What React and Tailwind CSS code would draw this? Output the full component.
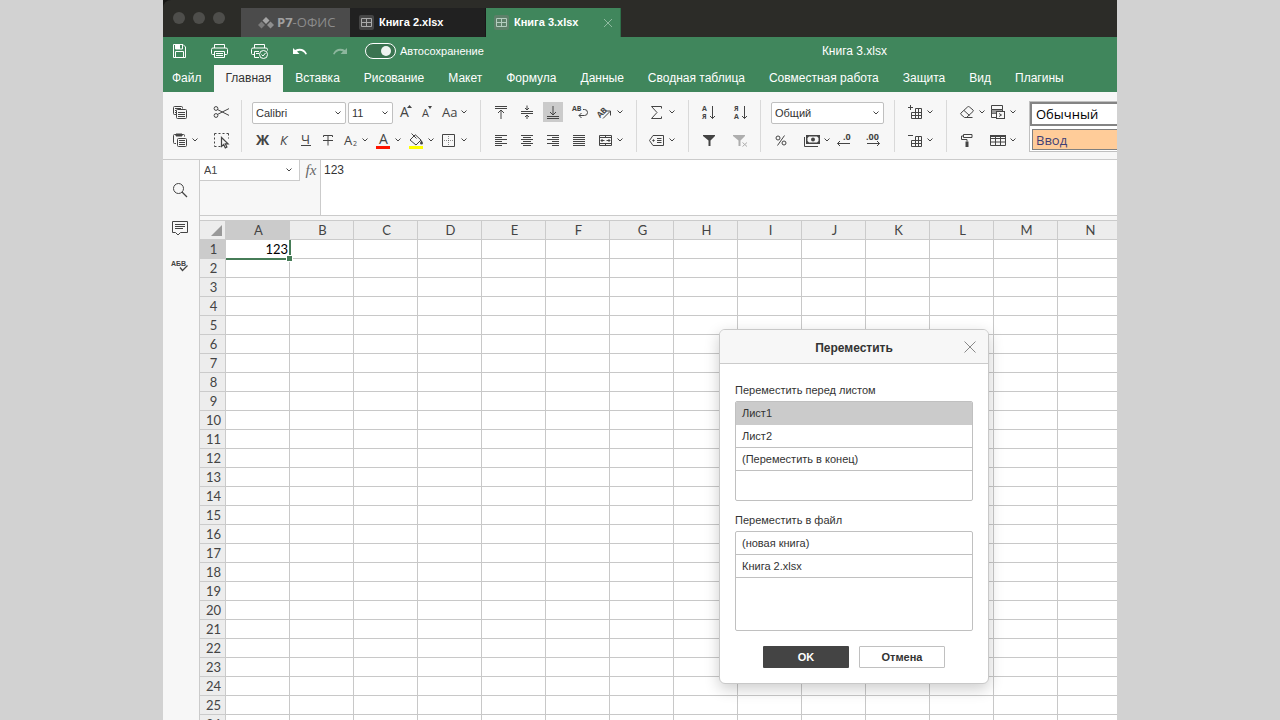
import React, { useState } from 'react';
import { clsx } from 'clsx';

const COLUMNS = ['A', 'B', 'C', 'D', 'E', 'F', 'G', 'H', 'I', 'J', 'K', 'L', 'M', 'N'];
const ROWS = Array.from({ length: 26 }, (_, i) => i + 1);

const MENU = [
  'Файл', 'Главная', 'Вставка', 'Рисование', 'Макет', 'Формула', 'Данные',
  'Сводная таблица', 'Совместная работа', 'Защита', 'Вид', 'Плагины',
];

const SHEETS = ['Лист1', 'Лист2', '(Переместить в конец)'];
const BOOKS = ['(новая книга)', 'Книга 2.xlsx'];

function Svg({ children, className }) {
  return (
    <svg viewBox="0 0 20 20" fill="none" stroke="currentColor" className={clsx('w-5 h-5 shrink-0', className)} aria-hidden="true">
      {children}
    </svg>
  );
}

function Chevron({ className }) {
  return (
    <svg viewBox="0 0 8 6" fill="none" stroke="currentColor" className={clsx('w-2 h-1.5 shrink-0', className)} aria-hidden="true">
      <path d="M1.5 1.5L4 4l2.5-2.5" />
    </svg>
  );
}

const ICONS = {
  copy: (
    <>
      <path d="M6 12.5H4.5a1 1 0 0 1-1-1v-6a1 1 0 0 1 1-1h7a1 1 0 0 1 1 1v1M5 6.5h6M5 8.5h1M5 10.5h1" />
      <rect x="6.5" y="7.5" width="10" height="9" rx="1" />
      <path d="M8 10.5h7M8 12.5h7M8 14.5h7" />
    </>
  ),
  paste: (
    <>
      <path d="M6 13.5H4.5a1 1 0 0 1-1-1v-7a1 1 0 0 1 1-1h9a1 1 0 0 1 1 1v1" />
      <path d="M6 4h6v2H6z" fill="currentColor" />
      <rect x="7.5" y="8.5" width="9" height="8" rx="1" />
      <path d="M9 10.5h6M9 12.5h6M9 14.5h6" />
    </>
  ),
  cut: (
    <>
      <circle cx="5" cy="6.5" r="1.9" />
      <circle cx="5" cy="13.5" r="1.9" />
      <path d="M6.6 7.6L18 13.4M6.6 12.4L18 6.6" />
    </>
  ),
  selectAll: (
    <>
      <path d="M3.5 3.5h14M3.5 3.5v13M3.5 16.5h7M17.5 3.5v5" strokeDasharray="2 2" />
      <path d="M10.5 7.5v9l2.200-2 1.600 3.400 1.600-.8-1.600-3.200h2.800z" fill="#f7f7f7" strokeWidth="1.200" />
    </>
  ),
  alignTop: <path d="M4 4.5h12M4 6.5h12M10 17V8M7 11l3-3 3 3" />,
  alignMiddle: <path d="M4 9.5h12M4 11.5h12M10 3.5V8M10 17v-4M8 6l2 2 2-2M8 15l2-2 2 2" />,
  alignBottom: <path d="M4 16.5h12M4 14.5h12M10 4v9M7 10l3 3 3-3" />,
  left: <path d="M4 5.5h12M4 7.5h7M4 9.5h12M4 11.5h7M4 13.5h12M4 15.5h7" />,
  center: <path d="M4 5.5h12M6 7.5h8M4 9.5h12M6 11.5h8M4 13.5h12M6 15.5h8" />,
  right: <path d="M4 5.5h12M9 7.5h7M4 9.5h12M9 11.5h7M4 13.5h12M9 15.5h7" />,
  justify: <path d="M4 5.5h12M4 7.5h12M4 9.5h12M4 11.5h12M4 13.5h12M4 15.5h12" />,
  wrap: (
    <>
      <text x="3" y="9" fontSize="7" fontWeight="bold" fill="currentColor" stroke="none">AB</text>
      <path d="M14 7.5h1.5a2.500 2.500 0 0 1 0 6H10M12.500 11L10 13.500l2.500 2.500" />
    </>
  ),
  orient: (
    <>
      <text x="1" y="13" fontSize="8" fontWeight="bold" fill="currentColor" stroke="none" transform="rotate(-45 7 10)">AB</text>
      <path d="M8 16.5l7-7M11 9h4.500v4.500" />
    </>
  ),
  merge: (
    <>
      <path d="M4.5 5.5h12v10h-12zM10.500 5.500v2M10.500 13.500v2M4.500 7.500h12M4.500 13.500h12" />
      <path d="M6 10.500h3.500M15 10.500h-3.500M7.500 9L6 10.500 7.500 12M13.500 9l1.500 1.500-1.500 1.500" />
    </>
  ),
  sum: <path d="M14.500 6.500v-2h-10l5.500 6-5.500 6h10v-2" />,
  tag: (
    <>
      <path d="M6 5.500h10.500v10H6L2.500 10.500z" />
      <circle cx="6.500" cy="10.500" r=".7" fill="currentColor" />
      <path d="M10 8.500h4.500M10 10.500h4.500M10 12.500h4.500" />
    </>
  ),
  sortAsc: (
    <>
      <text x="3" y="9" fontSize="7" fontWeight="bold" fill="currentColor" stroke="none">А</text>
      <text x="3" y="17" fontSize="7" fontWeight="bold" fill="currentColor" stroke="none">Я</text>
      <path d="M13.500 4v12.500M11 14l2.500 2.500L16 14" />
    </>
  ),
  sortDesc: (
    <>
      <text x="3" y="9" fontSize="7" fontWeight="bold" fill="currentColor" stroke="none">Я</text>
      <text x="3" y="17" fontSize="7" fontWeight="bold" fill="currentColor" stroke="none">А</text>
      <path d="M13.500 4v12.500M11 14l2.500 2.500L16 14" />
    </>
  ),
  filter: <path d="M4 5h12v1l-4.500 4.500V16h-2v-5.500L4 6z" fill="currentColor" stroke="none" />,
  clearFilter: (
    <>
      <path d="M2 5h12v1L9.500 10.500V16h-2v-5.500L2 6z" fill="currentColor" stroke="none" />
      <path d="M11.500 12.500l4.500 4M16 12.500l-4.500 4" />
    </>
  ),
  percent: (
    <>
      <circle cx="7" cy="8" r="2" />
      <circle cx="13" cy="13" r="2" />
      <path d="M13.500 5.500l-7 10" />
    </>
  ),
  money: (
    <>
      <path d="M2.500 7v9.500H16" />
      <path d="M4 5h14v9H4z" fill="currentColor" stroke="none" />
      <path d="M7 6.500h8l1.500 1.500v3L15 12.500H7L5.500 11V8z" fill="#f7f7f7" stroke="none" />
      <circle cx="11" cy="9.500" r="2" fill="currentColor" stroke="none" />
    </>
  ),
  decLess: (
    <>
      <text x="9" y="10" fontSize="9" fontWeight="bold" fill="currentColor" stroke="none">.0</text>
      <path d="M3.500 13.500H16M6 11l-2.500 2.500L6 16" />
    </>
  ),
  decMore: (
    <>
      <text x="3" y="10" fontSize="9" fontWeight="bold" fill="currentColor" stroke="none">.00</text>
      <path d="M4 13.500h12.500M14 11l2.500 2.500L14 16" />
    </>
  ),
  insertCells: <path d="M3 5.500h5M5.500 3v5M10.500 6.500h6v10h-10v-6M10.500 6.500v10M13.500 6.500v10M6.500 10.500h10M6.500 13.500h10" />,
  deleteCells: <path d="M3 5.500h5M10.500 6.500h6v10h-10v-6M10.500 6.500v10M13.500 6.500v10M6.500 10.500h10M6.500 13.500h10" />,
  eraser: <path d="M7.500 15.500l-3.500-3a1 1 0 0 1 0-1.500l6.500-6a1.500 1.500 0 0 1 2 0L16 8a1 1 0 0 1 0 1.500l-6.500 6zM7 8.500l5.500 5M9 15.500h6.500" />,
  roller: (
    <>
      <path d="M6.500 4.500h8.500v3H6.500zM6.500 6h-2v3.500h5.500v2" />
      <path d="M8.500 11.500h3V17h-3z" fill="currentColor" stroke="none" />
    </>
  ),
  condition: (
    <>
      <path d="M3.500 3.500h11v4h-11zM3.500 7.500v8H8M14.500 7.500v2M3.500 11.500H8" />
      <path d="M4 8h10v2H8.500v1.500H4z" fill="#999" stroke="none" />
      <rect x="8.500" y="9.500" width="8" height="7" />
      <path d="M11 11.500l2.500 1.500-2.500 1.500" />
    </>
  ),
  table: (
    <>
      <path d="M2.500 5.500h15v10h-15zM2.500 8.500h15M2.500 12h15M7.500 6v9.500M12.500 6v9.500" />
      <path d="M2 5h16v2H2z" fill="currentColor" stroke="none" />
    </>
  ),
  bigger: (
    <>
      <text x="5" y="15" fontSize="14" fill="currentColor" stroke="none">A</text>
      <path d="M12 6h5l-2.500-3z" fill="currentColor" stroke="none" />
    </>
  ),
  smaller: (
    <>
      <text x="5" y="15" fontSize="11" fill="currentColor" stroke="none">A</text>
      <path d="M11 4h4l-2 3z" fill="currentColor" stroke="none" />
    </>
  ),
  letterCase: <text x="3" y="15" fontSize="13" fill="currentColor" stroke="none">Aa</text>,
  bold: <text x="4" y="15" fontSize="14" fontWeight="bold" fill="currentColor" stroke="none">Ж</text>,
  italic: <text x="6" y="15" fontSize="13" fontStyle="italic" fill="currentColor" stroke="none">К</text>,
  underline: (
    <>
      <text x="5" y="14" fontSize="13" fill="currentColor" stroke="none">Ч</text>
      <path d="M5 15.500h10" />
    </>
  ),
  strike: (
    <>
      <path d="M5.500 7V5.500h9V7M10 5.500v10" />
      <path d="M5 10.500h10" />
    </>
  ),
  subscript: (
    <>
      <text x="4" y="15" fontSize="13" fill="currentColor" stroke="none">A</text>
      <text x="13" y="16" fontSize="7" fill="currentColor" stroke="none">2</text>
    </>
  ),
  fontColor: (
    <>
      <text x="6" y="14" fontSize="14" fill="currentColor" stroke="none">A</text>
      <path d="M3 16h14v3H3z" fill="#ff1400" stroke="none" />
    </>
  ),
  fill: (
    <>
      <path d="M9 4.500l6 5.500-5 5-6-5 5-5M5.500 3.500l5 5" />
      <path d="M15.500 10l1.500 3a1.500 1.500 0 1 1-3 0z" fill="currentColor" stroke="none" />
      <path d="M3 16h14v3H3z" fill="#ffff00" stroke="none" />
    </>
  ),
  borders: (
    <>
      <path d="M3.500 4.500h12v12h-12z" />
      <path d="M9.500 6v10M5 10.500h10" strokeDasharray="1 1" opacity=".6" />
    </>
  ),
};

function Tool({ icon, label, menu, active, disabled }) {
  return (
    <button aria-label={label} disabled={disabled}
      className={clsx("flex items-center gap-px font-['Open_Sans','Noto_Sans',sans-serif]", disabled && 'opacity-40')}>
      <Svg className={clsx(active && 'bg-[#cbcbcb]')}>{ICONS[icon]}</Svg>
      {menu && <Chevron />}
    </button>
  );
}

function Group({ children, className }) {
  return (
    <div className={clsx('flex flex-col shrink-0 gap-2 h-[52px] pt-0.5 border-r border-[#d9d9d9]', className)}>{children}</div>
  );
}

function Row({ children, className }) {
  return <div className={clsx('flex items-start shrink-0 h-5', className)}>{children}</div>;
}

function Combo({ label, value, className }) {
  return (
    <div className={clsx('relative flex', className)}>
      <select aria-label={label} defaultValue={value}
        className="appearance-none w-full h-[22px] pl-[3px] border border-[#c0c0c0] rounded-xs bg-white text-[11px] text-[#333]">
        <option>{value}</option>
      </select>
      <Chevron className="absolute right-1 top-2 pointer-events-none" />
    </div>
  );
}

function Ribbon() {
  return (
    <div className="flex shrink-0 pt-2 h-[68px] bg-[#f7f7f7] border-b border-[#cbcbcb] text-[#444] overflow-hidden">
      <Group className="pl-[7px] pr-2.5">
        <Row className="gap-[21px]">
          <Tool icon="copy" label="Копировать" />
          <Tool icon="cut" label="Вырезать" />
        </Row>
        <Row className="gap-3">
          <Tool icon="paste" label="Вставить" menu />
          <Tool icon="selectAll" label="Выделить всё" />
        </Row>
      </Group>

      <Group className="pl-2.5 pr-3">
        <Row className="gap-0.5">
          <Combo label="Шрифт" value="Calibri" className="w-[94px]" />
          <Combo label="Размер шрифта" value="11" className="w-[45px]" />
          <Tool icon="bigger" label="Увеличить размер шрифта" />
          <Tool icon="smaller" label="Уменьшить размер шрифта" />
          <Tool icon="letterCase" label="Изменить регистр" menu />
        </Row>
        <Row className="gap-1">
          <div className="flex gap-0.5 -mr-0.5">
            <Tool icon="bold" label="Полужирный" />
            <Tool icon="italic" label="Курсив" />
            <Tool icon="underline" label="Подчёркнутый" />
            <Tool icon="strike" label="Зачёркнутый" />
          </div>
          <Tool icon="subscript" label="Подстрочные знаки" menu />
          <Tool icon="fontColor" label="Цвет шрифта" menu />
          <Tool icon="fill" label="Цвет заливки" menu />
          <Tool icon="borders" label="Границы" menu />
        </Row>
      </Group>

      <Group className="pl-2.5 pr-3">
        <Row className="gap-1.5">
          <Tool icon="alignTop" label="По верхнему краю" />
          <Tool icon="alignMiddle" label="По середине" />
          <Tool icon="alignBottom" label="По нижнему краю" active />
          <Tool icon="wrap" label="Перенос текста" />
          <Tool icon="orient" label="Ориентация" menu />
        </Row>
        <Row className="gap-1.5">
          <Tool icon="left" label="По левому краю" />
          <Tool icon="center" label="По центру" />
          <Tool icon="right" label="По правому краю" />
          <Tool icon="justify" label="По ширине" />
          <Tool icon="merge" label="Объединить" menu />
        </Row>
      </Group>

      <Group className="pl-2.5 pr-3">
        <Row><Tool icon="sum" label="Сумма" menu /></Row>
        <Row><Tool icon="tag" label="Именованные диапазоны" menu /></Row>
      </Group>

      <Group className="pl-2.5 pr-[9px]">
        <Row className="gap-3">
          <Tool icon="sortAsc" label="По возрастанию" />
          <Tool icon="sortDesc" label="По убыванию" />
        </Row>
        <Row className="gap-3">
          <Tool icon="filter" label="Фильтр" />
          <Tool icon="clearFilter" label="Очистить фильтр" disabled />
        </Row>
      </Group>

      <Group className="pl-2.5 pr-2.5">
        <Row><Combo label="Числовой формат" value="Общий" className="w-[113px]" /></Row>
        <div className="grid grid-cols-[31px_32px_29px_20px] items-start shrink-0 h-5">
          <Tool icon="percent" label="Процентный формат" />
          <Tool icon="money" label="Финансовый формат" menu />
          <Tool icon="decLess" label="Уменьшить разрядность" />
          <Tool icon="decMore" label="Увеличить разрядность" />
        </div>
      </Group>

      <Group className="pl-2.5 pr-3">
        <Row><Tool icon="insertCells" label="Вставить ячейки" menu /></Row>
        <Row><Tool icon="deleteCells" label="Удалить ячейки" menu /></Row>
      </Group>

      <div className="flex flex-col shrink-0 gap-2 pl-2.5 pr-3 pt-0.5">
        <Row className="gap-0.5">
          <Tool icon="eraser" label="Очистить" menu />
          <Tool icon="condition" label="Условное форматирование" menu />
        </Row>
        <Row className="gap-[11px]">
          <Tool icon="roller" label="Копировать стиль" />
          <Tool icon="table" label="Форматировать как таблицу" menu />
        </Row>
      </div>

      <div className="flex flex-col flex-1 gap-[3px] min-w-0 h-[51px] mt-px border border-r-0 border-[#c0c0c0] bg-white font-['Open_Sans','Noto_Sans',sans-serif] text-[13px] leading-5">
        <button className="h-6 pl-1 border-2 border-r-0 border-[#848484] text-left text-black">Обычный</button>
        <button className="h-[21px] ml-0.5 pl-[3px] border border-r-0 border-[#7f7f7f] bg-[#ffcc99] text-left text-[#3f3f76]">Ввод</button>
      </div>
    </div>
  );
}

function SheetIcon({ className }) {
  return (
    <svg viewBox="0 0 15 15" fill="none" stroke="currentColor" className={clsx('w-[15px] h-[15px] shrink-0', className)} aria-hidden="true">
      <path d="M2.500 3.500h10v8h-10zM2.500 7.500h10M7.500 3.500v8" />
    </svg>
  );
}

function TitleBar() {
  return (
    <div className="shrink-0 bg-[#171715]">
      <div className="flex items-end h-[37px] rounded-tl-lg bg-[#2c2c28]">
        <div className="flex gap-2 w-[78px] h-[29px] pl-2.5 pt-1">
          {['Закрыть', 'Свернуть', 'Развернуть'].map(l => (
            <button key={l} aria-label={l} className="w-3 h-3 rounded-full bg-[#4e4e4b]" />
          ))}
        </div>
        <button className="flex items-center w-[109px] h-[29px] pl-4 bg-[#4b4b4b] font-['Open_Sans','Noto_Sans',sans-serif] text-[13px] text-[#8c8c8c]">
          <svg viewBox="0 0 18 14" className="w-[18px] h-3.5 mr-0.5 shrink-0" aria-hidden="true">
            <path d="M9 1l3.500 3.500L9 8 5.500 4.500z" fill="#a5a5a5" />
            <path d="M4.500 5.500l3.500 3.500-3.500 3.500L1 9z" fill="#7b7b7b" />
            <path d="M13.500 5.500L17 9l-3.500 3.500L10 9z" fill="#8f8f8f" />
          </svg>
          <span><b className="text-[#a0a0a0]">Р7</b>-ОФИС</span>
        </button>
        <button className="flex items-center gap-[5px] w-[136px] h-[29px] pl-[9px] bg-[#212121] border-r border-[#181818] text-[11px] font-bold text-white">
          <SheetIcon className="bg-[#454545] text-[#aaa] rounded-xs" />
          Книга 2.xlsx
        </button>
        <div className="flex items-center w-[135px] h-[29px] px-2 bg-[#40865c] text-[11px] font-bold text-white border-r border-[#2f6f49]">
          <button className="flex items-center gap-[5px]">
            <SheetIcon className="bg-[#5d8069] text-[#b4cdbf] rounded-xs" />
            Книга 3.xlsx
          </button>
          <button aria-label="Закрыть вкладку" className="ml-auto">
            <svg viewBox="0 0 8 8" stroke="#8fb99f" className="w-2 h-2" aria-hidden="true"><path d="M0 0l8 8M8 0L0 8" /></svg>
          </button>
        </div>
      </div>
    </div>
  );
}

function QuickAccess() {
  const [autosave, setAutosave] = useState(true);
  return (
    <div className="flex items-center shrink-0 h-7 pl-1.5 text-white">
      <div className="flex gap-5">
        <button aria-label="Сохранить">
          <Svg><path d="M4.500 3.500h9.500l2.500 2.500v10.500h-12zM6.500 16.500v-6h8v6M6.500 4v4h7V4" /><path d="M7 4h4v4H7z" fill="currentColor" stroke="none" /></Svg>
        </button>
        <button aria-label="Печать">
          <Svg><path d="M5.500 7V3.500h10V7M5 13.500H3.500a1 1 0 0 1-1-1v-4a1.500 1.500 0 0 1 1.500-1.500h13a1.500 1.500 0 0 1 1.500 1.500v4a1 1 0 0 1-1 1H16M5.500 10.500h10v6h-10zM7 12.500h7M7 14.500h7" /></Svg>
        </button>
        <button aria-label="Быстрая печать">
          <Svg>
            <path d="M5.500 7V3.500h10V7M5 13.500H3.500a1 1 0 0 1-1-1v-4a1.500 1.500 0 0 1 1.500-1.500h13a1.500 1.500 0 0 1 1.500 1.500v1M10 10.500H5.500v6H10M7 12.500h3" />
            <circle cx="14.500" cy="13.500" r="4" /><path d="M12.500 13.500l1.500 1.500 2.500-3" />
          </Svg>
        </button>
        <button aria-label="Отменить">
          <Svg><path d="M4 7v6h6.500L8 10.500c3-1.500 6.500-.5 8.500 3l1.500-.5C16 7.500 10.500 6.500 6 9z" fill="currentColor" stroke="none" /></Svg>
        </button>
        <button aria-label="Повторить" disabled className="opacity-40">
          <Svg><path d="M18 7v6h-6.500l2.500-2.500c-3-1.500-6.500-.5-8.500 3L4 13c2-5.500 7.500-6.500 12-4z" fill="currentColor" stroke="none" /></Svg>
        </button>
      </div>
      <label className="flex items-center gap-1 ml-4 text-[11px]">
        <input type="checkbox" checked={autosave} onChange={e => setAutosave(e.target.checked)} className="sr-only peer" />
        <span className="flex items-center justify-start peer-checked:justify-end w-[31px] h-4 px-1 border border-white rounded-full bg-[#3a7350]">
          <span className="w-2.5 h-2.5 rounded-full bg-[#eef3f0]" />
        </span>
        Автосохранение
      </label>
      <span className="ml-auto pr-[230px] text-xs">Книга 3.xlsx</span>
    </div>
  );
}

function SideBar() {
  return (
    <div className="flex flex-col items-center gap-[18px] shrink-0 w-[37px] pt-5 pr-[3px] bg-[#f7f7f7] border-r border-[#cbcbcb] text-[#444]">
      <button aria-label="Поиск">
        <Svg><circle cx="8.500" cy="8.500" r="5" /><path d="M12 12l5 5" strokeWidth="1.300" /></Svg>
      </button>
      <button aria-label="Комментарии">
        <Svg><path d="M2.500 3.500h15v11h-7L8 17l-2.500-2.500h-3zM5 6.500h10M5 8.500h10M5 10.500h8" /></Svg>
      </button>
      <button aria-label="Проверка орфографии">
        <Svg>
          <text x="1" y="10" fontSize="7" fontWeight="bold" fill="currentColor" stroke="none">АБВ</text>
          <path d="M10 11.500l2.500 3 5-5" strokeWidth="1.300" />
        </Svg>
      </button>
    </div>
  );
}

function FormulaBar() {
  return (
    <div className="flex shrink-0 h-14 border-b border-[#cbcbcb] bg-[#f7f7f7]">
      <div className="flex self-start items-center w-[100px] h-[21px] pr-1.5 border-r border-b border-[#cbcbcb] bg-white">
        <input aria-label="Имя ячейки" defaultValue="A1" className="flex-1 min-w-0 pl-1 text-[11px] text-[#444] outline-none" />
        <button aria-label="Диапазоны" className="text-[#444]"><Chevron /></button>
      </div>
      <button aria-label="Вставить функцию" className="self-start w-5 h-5 pl-0.5 font-['Liberation_Serif',serif] italic text-[15px] leading-5 text-[#666]">fx</button>
      <textarea aria-label="Строка формул" defaultValue="123"
        className="flex-1 resize-none border-l border-[#cbcbcb] bg-white px-[3px] py-0.5 text-xs leading-4 text-[#333] outline-none" />
    </div>
  );
}

function Grid() {
  return (
    <div className="flex-1 min-h-0 overflow-hidden mt-1 border-t border-[#cbcbcb] bg-white">
      <table className="table-fixed border-separate border-spacing-0 w-[922px] font-['Lato',sans-serif] text-[13px] leading-[18px] text-[#444]">
        <colgroup>
          <col className="w-[26px]" />
          {COLUMNS.map(c => <col key={c} className="w-16" />)}
        </colgroup>
        <thead>
          <tr>
            <td className="h-[19px] p-0 border-r border-b border-[#cbcbcb] bg-[#ededed]">
              <svg viewBox="0 0 11 11" className="w-[11px] h-[11px] ml-auto mr-[3px]" aria-hidden="true"><path d="M11 0v11H0z" fill="#999" /></svg>
            </td>
            {COLUMNS.map(c => (
              <th key={c} scope="col"
                className={clsx('h-[19px] p-0 pl-0.5 border-r border-b border-[#cbcbcb] font-normal', c === 'A' ? 'bg-[#cbcbcb]' : 'bg-[#ededed]')}>
                {c}
              </th>
            ))}
          </tr>
        </thead>
        <tbody>
          {ROWS.map(r => (
            <tr key={r}>
              <th scope="row"
                className={clsx('h-[19px] p-0 pl-0.5 border-r border-b border-[#cbcbcb] font-normal', r === 1 ? 'bg-[#cbcbcb]' : 'bg-[#ededed]')}>
                {r}
              </th>
              {COLUMNS.map(c => (
                <td key={c} className="h-[19px] p-0 border-r border-b border-[#c8c8c8]">
                  {r === 1 && c === 'A' && (
                    <div className="relative h-[18px] pr-px text-right text-black">
                      123
                      <span className="absolute left-0 top-0 -right-0.5 -bottom-0.5 border-r-2 border-b-2 border-[#467c57]" />
                      <span className="absolute -right-1 -bottom-1 w-[7px] h-[7px] border border-white bg-[#467c57]" />
                    </div>
                  )}
                </td>
              ))}
            </tr>
          ))}
        </tbody>
      </table>
    </div>
  );
}

function PickList({ label, items, initial = null }) {
  const [selected, setSelected] = useState(initial);
  return (
    <div>
      <p className="h-4 leading-4 mb-[3px]">{label}</p>
      <ul aria-label={label} className="h-[100px] border border-[#c0c0c0] rounded-xs overflow-hidden">
        {items.map(item => (
          <li key={item}>
            <button onClick={() => setSelected(item)}
              className={clsx('block w-full h-[23px] px-1.5 border-b text-left', selected === item ? 'bg-[#cbcbcb] border-[#cbcbcb]' : 'border-[#c0c0c0]')}>
              {item}
            </button>
          </li>
        ))}
      </ul>
    </div>
  );
}

function MoveDialog() {
  return (
    <div role="dialog" aria-label="Переместить"
      className="absolute left-[556px] top-[329px] w-[270px] border border-[#c8c8c8] rounded-md bg-white shadow-[0_5px_15px_rgba(0,0,0,0.2)] text-[11px] text-[#333] overflow-hidden">
      <div className="relative flex items-center justify-center h-[34px] pt-0.5 bg-[#f7f7f7] border-b border-[#cbcbcb]">
        <h2 className="text-xs font-bold">Переместить</h2>
        <button aria-label="Закрыть" className="absolute right-3 top-[11px]">
          <svg viewBox="0 0 12 12" stroke="#888" className="w-3 h-3" aria-hidden="true"><path d="M.5.5l11 11M11.500.5l-11 11" /></svg>
        </button>
      </div>
      <div className="flex flex-col gap-[11px] px-[15px] pt-[18px]">
        <PickList label="Переместить перед листом" items={SHEETS} initial="Лист1" />
        <PickList label="Переместить в файл" items={BOOKS} />
      </div>
      <div className="flex justify-center gap-2.5 py-[15px]">
        <button className="w-[86px] h-[22px] rounded-[1px] bg-[#444] font-bold text-white">OK</button>
        <button className="w-[86px] h-[22px] rounded-[1px] border border-[#c0c0c0] font-bold">Отмена</button>
      </div>
    </div>
  );
}

export default function App() {
  const [tab, setTab] = useState('Главная');
  return (
    <div className="h-screen px-[163px] overflow-hidden bg-[#d2d2d2] font-['Liberation_Sans',Arial,sans-serif]">
      <div className="relative flex flex-col h-full overflow-hidden bg-[#f7f7f7]">
        <TitleBar />
        <header className="flex flex-col shrink-0 bg-[#40865c]">
          <QuickAccess />
          <nav className="flex h-[27px] -ml-[3px] overflow-hidden">
            {MENU.map(m => (
              <button key={m} onClick={() => setTab(m)}
                className={clsx('shrink-0 px-3 pb-0.5 text-xs', tab === m ? 'bg-[#f7f7f7] text-[#333]' : 'text-white')}>
                {m}
              </button>
            ))}
          </nav>
        </header>
        <Ribbon />
        <div className="flex flex-1 min-h-0">
          <SideBar />
          <main className="flex flex-col flex-1 min-w-0">
            <FormulaBar />
            <Grid />
          </main>
        </div>
        <MoveDialog />
      </div>
    </div>
  );
}
